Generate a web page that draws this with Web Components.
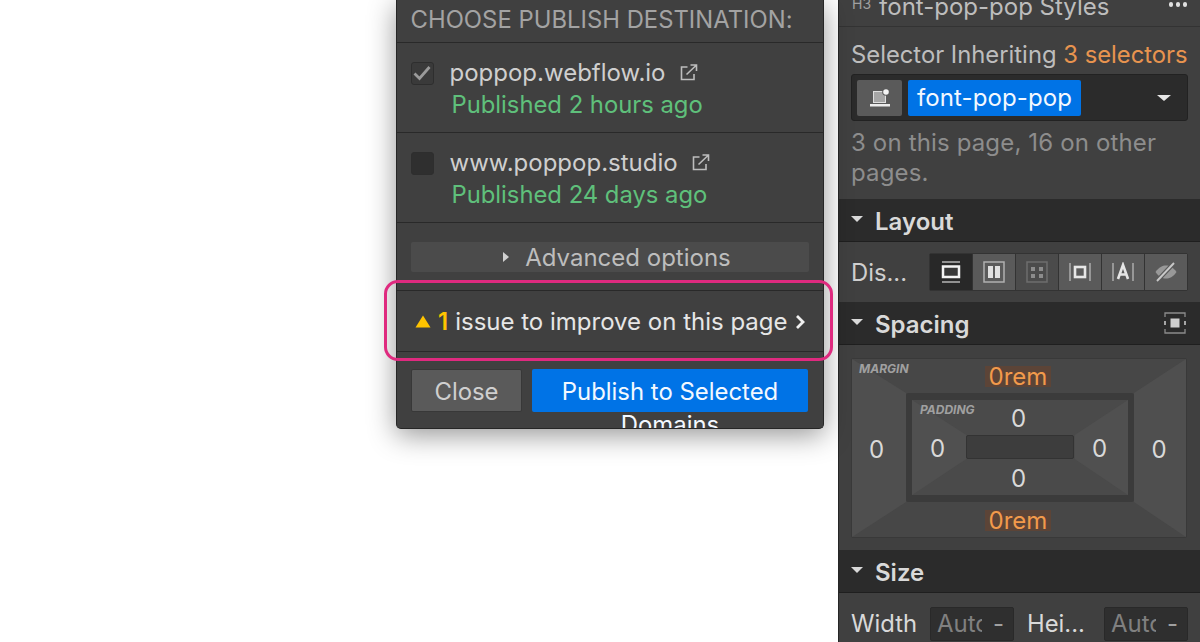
<!DOCTYPE html>
<html>
<head>
<meta charset="utf-8">
<title>Publish</title>
<style>
  html, body { margin: 0; height: 100%; background: #fff; overflow: hidden; }
  body { font-family: Inter, "Noto Sans", sans-serif; }
</style>
</head>
<body>
<app-page>
  <publish-modal slot="main"></publish-modal>
  <style-panel slot="side"></style-panel>
</app-page>

<script>
const ICON_EXT = `<svg width="18" height="17" viewBox="0 0 18 17" fill="none" stroke="#bdbdbd" stroke-width="1.600"><path d="M7.500 3H1.500v12.500H14V10"/><path d="M6.500 10.500L16 1.500M10.500 1h6v6"/></svg>`;

// Whole page: blank canvas with modal, and the style panel on the right
class AppPage extends HTMLElement {
  constructor() {
    super();
    this.attachShadow({ mode: 'open' });
    this.shadowRoot.innerHTML = `
      <style>
        :host { display: flex; width: 1200px; height: 642px; overflow: hidden; background: #fff; }
        .main { flex: 0 0 838px; padding-left: 396px; box-sizing: border-box; }
        .side { flex: 0 0 362px; }
      </style>
      <div class="main"><slot name="main"></slot></div>
      <div class="side"><slot name="side"></slot></div>`;
  }
}

class DestRow extends HTMLElement {
  constructor() {
    super();
    this.attachShadow({ mode: 'open' });
    const checked = this.hasAttribute('checked');
    this.shadowRoot.innerHTML = `
      <style>
        :host { display: flex; height: 90px; box-sizing: border-box; border-bottom: 1.500px solid #292929; padding: 18.500px 0 0 13.500px; }
        .box { width: 23.500px; height: 23.500px; box-sizing: border-box; border-radius: 3px; background: ${checked ? '#3a3a3a' : '#2f2f2f'}; border: 1px solid #2e2e2e; flex: none; display: flex; align-items: center; justify-content: center; }
        .text { margin-left: 15.500px; }
        .name { display: flex; align-items: center; gap: 14px; font-size: 24px; line-height: 31px; color: #cfcfcf; margin-top: -5px; }
        .status { font-size: 23.800px; line-height: 31px; color: #5fc07b; margin: 1px 0 0 2px; }
      </style>
      <div class="box">${checked ? `<svg width="18" height="16" viewBox="0 0 18 16" fill="none" stroke="#9a9a9a" stroke-width="2.800"><path d="M1.500 8.500l5 5L16.500 2"/></svg>` : ''}</div>
      <div class="text">
        <div class="name"><span>${this.getAttribute('name')}</span>${ICON_EXT}</div>
        <div class="status">${this.getAttribute('status')}</div>
      </div>`;
  }
}

class PublishModal extends HTMLElement {
  constructor() {
    super();
    this.attachShadow({ mode: 'open' });
    this.shadowRoot.innerHTML = `
      <style>
        :host { display: block; position: relative; width: 428px; height: 429px; box-sizing: border-box; background: #404040; border: 1px solid #262626; border-top: 0; border-radius: 0 0 5px 5px; box-shadow: 0 6px 28px rgba(0,0,0,.42); color: #d9d9d9; }
        .head { height: 43px; box-sizing: border-box; border-bottom: 1.500px solid #292929; font-size: 23.800px; line-height: 40px; padding-left: 13.500px; color: #a3a3a3; white-space: nowrap; letter-spacing: .03px; }
        .adv-wrap { height: 68px; box-sizing: border-box; padding: 18.500px 14px 0; border-bottom: 1.500px solid #292929; }
        .adv { height: 30px; box-sizing: border-box; background: #4b4b4b; border-radius: 2px; display: flex; align-items: center; justify-content: center; gap: 16px; font-size: 24px; color: #bdbdbd; padding: 1px 0 0 14px; }
        .tri { width: 0; height: 0; border-left: 6px solid #d0d0d0; border-top: 5.500px solid transparent; border-bottom: 5.500px solid transparent; }
        .issue { height: 61px; box-sizing: border-box; border-bottom: 1.500px solid #292929; display: flex; align-items: center; padding: 1px 0 0 18px; font-size: 24px; color: #e6e6e6; white-space: nowrap; }
        .warn { flex: none; margin-right: 7px; }
        .issue b { font-weight: 600; color: #ffc400; margin-right: 7px; }
        .chev { margin-left: 7px; flex: none; }
        .foot { display: flex; gap: 10px; padding: 17px 15px 0 14px; height: 76px; box-sizing: border-box; overflow: hidden; }
        .btn { height: 43px; box-sizing: border-box; border-radius: 2px; font-size: 23.900px; text-align: center; }
        .close { flex: 0 0 111px; background: #5a5a5a; color: #cfcfcf; border: 1px solid #383838; line-height: 43px; }
        .pub { flex: 1; background: #0073e6; color: #f3f8ff; line-height: 33px; padding: 6px 10px 0; }
        .ring { position: absolute; left: -13px; top: 280px; width: 449px; height: 81px; box-sizing: border-box; border: 3.500px solid #df2a7f; border-radius: 14px; }
      </style>
      <div class="head">CHOOSE PUBLISH DESTINATION:</div>
      <dest-row checked name="poppop.webflow.io" status="Published 2 hours ago"></dest-row>
      <dest-row name="www.poppop.studio" status="Published 24 days ago"></dest-row>
      <div class="adv-wrap"><div class="adv"><span class="tri"></span><span>Advanced options</span></div></div>
      <div class="issue">
        <svg class="warn" width="16" height="13" viewBox="0 0 16 13"><path d="M8 .5L15.500 12.500H.5z" fill="#ffc400"/></svg>
        <b>1</b><span>issue to improve on this page</span>
        <svg class="chev" width="11" height="16" viewBox="0 0 11 16" fill="none" stroke="#f0f0f0" stroke-width="2.800"><path d="M2 2l6 6-6 6"/></svg>
      </div>
      <div class="foot">
        <div class="btn close">Close</div>
        <div class="btn pub">Publish to Selected Domains</div>
      </div>
      <div class="ring"></div>`;
  }
}

class SectionHead extends HTMLElement {
  constructor() {
    super();
    this.attachShadow({ mode: 'open' });
    this.shadowRoot.innerHTML = `
      <style>
        :host { display: flex; align-items: center; height: 43px; box-sizing: border-box; background: #2b2b2b; border-bottom: 1.500px solid #1f1f1f; padding: 2px 14px 0 12px; font-size: 24px; font-weight: 600; color: #d9d9d9; }
        .caret { width: 0; height: 0; border-top: 6px solid #d9d9d9; border-left: 6px solid transparent; border-right: 6px solid transparent; margin-right: 12px; margin-top: -5px; }
        .end { margin-left: auto; display: flex; margin-top: -2px; }
      </style>
      <span class="caret"></span><span>${this.getAttribute('label')}</span><span class="end"><slot></slot></span>`;
  }
}

// Margin / padding box of the style panel
class SpacingBox extends HTMLElement {
  constructor() {
    super();
    this.attachShadow({ mode: 'open' });
    this.shadowRoot.innerHTML = `
      <style>
        :host { display: block; position: relative; width: 336px; height: 180px; box-sizing: border-box; background: #474747; border: 1px solid #393939; border-radius: 2px; font-size: 24px; color: #d9d9d9; }
        svg.bg { position: absolute; inset: 0; width: 100%; height: 100%; }
        .outer { position: relative; display: grid; grid-template-columns: 54px 228px 52px; grid-template-rows: 34px 109px 35px; height: 100%; }
        .cell { display: flex; align-items: center; justify-content: center; }
        .rem span { color: #f29a4b; background: #5c4437; line-height: 21px; padding: 0 4px; margin-left: -4px; }
        .rem.low { padding-top: 1px; }
        .side-l { padding: 3px 5px 0 0; }
        .side-r { padding: 3px 2px 0 0; }
        .lbl { position: absolute; font-size: 12px; font-style: italic; font-weight: 700; color: #a0a0a0; left: 7px; top: 2px; }
        .inner { position: relative; box-sizing: border-box; background: #4a4a4a; border: 7px solid #3b3b3b; border-width: 7px 6.500px; border-radius: 2px; display: grid; grid-template-columns: 54px 108px 53px; grid-template-rows: 35px 24px 36px; }
        .inner .lbl { left: 8px; top: 2px; }
        .inner .cell { position: relative; }
        .inner .v { padding: 2px 3px 0 0; }
        .inner .h-l { padding: 2px 3px 0 0; }
        .inner .h-r { padding: 2px 2px 0 0; }
        .core { position: relative; background: #3d3d3d; border: 1px solid #333; border-radius: 2px; }
      </style>
      <svg class="bg" viewBox="0 0 334 178" preserveAspectRatio="none">
        <path d="M0 0L54 34V143L0 178z" fill="#4f4f4f"/><path d="M334 0L282 34V143L334 178z" fill="#4f4f4f"/>
      </svg>
      <span class="lbl">MARGIN</span>
      <div class="outer">
        <div></div><div class="cell rem"><span>0rem</span></div><div></div>
        <div class="cell side-l">0</div>
        <div class="inner">
          <svg class="bg" viewBox="0 0 215 95" preserveAspectRatio="none">
            <path d="M0 0L54 35V59L0 95z" fill="#505050"/><path d="M215 0L162 35V59L215 95z" fill="#505050"/>
          </svg>
          <span class="lbl">PADDING</span>
          <div></div><div class="cell v">0</div><div></div>
          <div class="cell h-l">0</div><div class="core"></div><div class="cell h-r">0</div>
          <div></div><div class="cell v">0</div><div></div>
        </div>
        <div class="cell side-r">0</div>
        <div></div><div class="cell rem low"><span>0rem</span></div><div></div>
      </div>`;
  }
}

class StylePanel extends HTMLElement {
  constructor() {
    super();
    this.attachShadow({ mode: 'open' });
    this.shadowRoot.innerHTML = `
      <style>
        :host { display: block; width: 362px; height: 642px; box-sizing: border-box; background: #404040; border-left: 1.500px solid #262626; color: #d9d9d9; overflow: hidden; font-size: 24px; }
        .top { height: 27px; box-sizing: border-box; border-bottom: 1.500px solid #333; display: flex; align-items: flex-start; padding: 0 13px 0 13px; overflow: hidden; }
        .top .h { font-size: 14px; line-height: 14px; color: #a0a0a0; margin: -3px 8px 0 0; }
        .top .t { line-height: 29px; color: #bdbdbd; white-space: nowrap; margin-top: -8px; }
        .dots { margin-left: auto; display: flex; gap: 2.300px; margin-top: 2px; }
        .dots i { width: 4.500px; height: 4.500px; background: #e0e0e0; border-radius: 50%; }
        .sel { height: 172px; box-sizing: border-box; padding: 13px 12px 0 12px; }
        .inh { line-height: 30px; color: #bdbdbd; white-space: nowrap; font-size: 23.800px; }
        .inh em { font-style: normal; color: #e8944f; }
        .field { margin-top: 4px; height: 47px; box-sizing: border-box; background: #2b2b2b; border: 1px solid #222; border-radius: 3px; display: flex; align-items: center; padding: 0 6px 0 5px; }
        .chip-ic { width: 45px; height: 36px; background: #5a5a5a; border-radius: 2px; display: flex; align-items: center; justify-content: center; margin-right: 6px; }
        .tag { width: 173px; height: 36px; box-sizing: border-box; background: #0073e6; color: #f3f8ff; border-radius: 2px; line-height: 35px; padding-left: 9px; letter-spacing: .1px; }
        .dd { margin-left: auto; margin-right: 10px; width: 0; height: 0; border-top: 6px solid #e6e6e6; border-left: 7px solid transparent; border-right: 7px solid transparent; }
        .note { margin-top: 7px; line-height: 30px; color: #8d8d8d; letter-spacing: .15px; }
        .disp { height: 60px; box-sizing: border-box; display: flex; align-items: center; padding: 0 12px; }
        .disp .l { flex: 1; color: #cfcfcf; font-size: 23.800px; }
        .seg { display: flex; height: 36px; background: #333; border: 1px solid #333; border-radius: 2px; gap: 1px; }
        .seg div { width: 42px; display: flex; align-items: center; justify-content: center; background: #5a5a5a; }
        .seg .on { background: #282828; }
        .seg .dim { background: #4b4b4b; }
        .space { height: 205px; box-sizing: border-box; padding: 13px 12px 0 12px; }
        .size { display: flex; align-items: center; height: 49px; padding: 12px 12px 0 12px; box-sizing: border-box; }
        .size .l { flex: none; color: #d9d9d9; font-size: 23.800px; }
        .inp { width: 84px; height: 34px; flex: none; box-sizing: border-box; background: #2f2f2f; border: 1px solid #292929; border-radius: 2px; display: flex; align-items: center; padding-left: 6px; color: #808080; overflow: hidden; white-space: nowrap; }
        .inp span { width: 45px; overflow: hidden; }
        .inp b { font-weight: 400; margin-left: 11px; color: #a0a0a0; }
      </style>
      <div class="top">
        <span class="h">H3</span><span class="t">font-pop-pop Styles</span>
        <span class="dots"><i></i><i></i><i></i></span>
      </div>
      <div class="sel">
        <div class="inh">Selector Inheriting <em>3 selectors</em></div>
        <div class="field">
          <div class="chip-ic">
            <svg width="20" height="18" viewBox="0 0 20 18"><rect x="3.500" y="2.500" width="12" height="11" fill="#a6a6a6" stroke="#dedede"/><path d="M0 15h20v2.500H0z" fill="#ececec"/><circle cx="16" cy="3" r="3.800" fill="#5a5a5a"/><circle cx="16" cy="3" r="2.800" fill="#f4f4f4"/></svg>
          </div>
          <div class="tag">font-pop-pop</div>
          <span class="dd"></span>
        </div>
        <div class="note">3 on this page, 16 on other pages.</div>
      </div>
      <section-head label="Layout"></section-head>
      <div class="disp">
        <span class="l">Dis...</span>
        <div class="seg">
          <div class="on"><svg width="20" height="22" viewBox="0 0 20 22" fill="none"><path d="M1 1h18M1 21h18" stroke="#b4b4b4" stroke-width="1.500"/><rect x="2" y="5.500" width="16" height="10.500" fill="#383838" stroke="#f4f4f4" stroke-width="2.500"/></svg></div>
          <div><svg width="22" height="22" viewBox="0 0 22 22"><rect x="1" y="1" width="20" height="20" fill="none" stroke="#b0b0b0" stroke-width="1.500"/><path d="M5 5h5v12H5zM12 5h5v12h-5z" fill="#e0e0e0"/></svg></div>
          <div class="dim"><svg width="22" height="22" viewBox="0 0 22 22"><rect x="1" y="1" width="20" height="20" fill="none" stroke="#6e6e6e" stroke-width="1.500"/><path d="M5 6h4v4H5zM13 6h4v4h-4zM5 13h4v4H5zM13 13h4v4h-4z" fill="#8c8c8c"/></svg></div>
          <div><svg width="22" height="20" viewBox="0 0 22 20" fill="none"><path d="M1 1v18M21 1v18" stroke="#b8b8b8" stroke-width="1.300"/><rect x="6" y="5" width="10" height="10" stroke="#e6e6e6" stroke-width="2.600"/></svg></div>
          <div><svg width="22" height="20" viewBox="0 0 22 20" fill="none"><path d="M1 1v18M21 1v18" stroke="#b8b8b8" stroke-width="1.300"/><path d="M6 17L11 3l5 14M7.500 12.500h7" stroke="#e6e6e6" stroke-width="2.600"/></svg></div>
          <div><svg width="24" height="22" viewBox="0 0 24 22" fill="none" stroke="#a8a8a8"><path d="M1.500 11C5 6 8.500 4.500 12 4.500S19 6 22.500 11C19 16 15.500 17.500 12 17.500S5 16 1.500 11z" fill="#989898" stroke="none"/><path d="M3 20L20 2" stroke="#5a5a5a" stroke-width="4.500"/><path d="M3 20L20 2" stroke="#c8c8c8" stroke-width="1.900"/></svg></div>
        </div>
      </div>
      <section-head label="Spacing">
        <svg width="22" height="22" viewBox="0 0 22 22" fill="none"><path d="M1 5V1h20v4M1 17v4h20v-4" stroke="#8c8c8c" stroke-width="1.300"/><path d="M1 9v4M21 9v4" stroke="#d0d0d0" stroke-width="1.500"/><rect x="6.500" y="6.500" width="9" height="9" fill="#d0d0d0"/></svg>
      </section-head>
      <div class="space"><spacing-box></spacing-box></div>
      <section-head label="Size"></section-head>
      <div class="size">
        <span class="l">Width</span>
        <div class="inp" style="margin-left:13px"><span>Auto</span><b>-</b></div>
        <span class="l" style="margin-left:13px">Hei...</span>
        <div class="inp" style="margin-left:auto"><span>Auto</span><b>-</b></div>
      </div>`;
  }
}

customElements.define('app-page', AppPage);
customElements.define('dest-row', DestRow);
customElements.define('publish-modal', PublishModal);
customElements.define('section-head', SectionHead);
customElements.define('spacing-box', SpacingBox);
customElements.define('style-panel', StylePanel);
</script>
</body>
</html>
